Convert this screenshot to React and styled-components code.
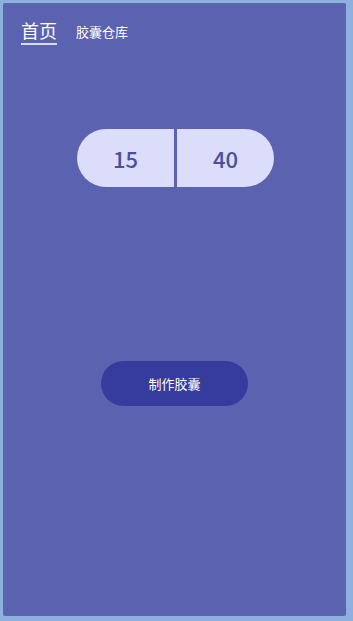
import styled, { createGlobalStyle } from 'styled-components';

const GlobalStyle = createGlobalStyle`
  html, body {
    margin: 0;
    padding: 0;
    background: #8db0de;
  }
  body {
    font-family: "Noto Sans CJK SC", "Noto Sans", sans-serif;
  }
`;

const Frame = styled.div`
  width: 353px;
  height: 621px;
  box-sizing: border-box;
  padding: 3px 7px 5px 3px;
`;

const Screen = styled.div`
  height: 100%;
  background: #5b62b0;
  border-radius: 2px;
  display: flex;
  flex-direction: column;
`;

const TabBar = styled.div`
  display: flex;
  align-items: flex-start;
  gap: 19px;
  padding: 15px 0 0 18px;
`;

const Tab = styled.div`
  color: #fff;
  font-size: ${(p) => (p.active ? '18px' : '13px')};
  line-height: 24px;
  margin-top: ${(p) => (p.active ? '0' : '2px')};
  padding-bottom: ${(p) => (p.active ? '1px' : '0')};
  border-bottom: ${(p) => (p.active ? '2px solid #dcdcf0' : 'none')};
`;

const Capsule = styled.div`
  margin: 84px auto 0;
  display: flex;
  gap: 3px;
  width: 197px;
  height: 58px;
  transform: translateX(1px);
`;

const Half = styled.div`
  flex: 1;
  background: #dcdcfb;
  border-radius: ${(p) => (p.side === 'left' ? '29px 0 0 29px' : '0 29px 29px 0')};
  display: flex;
  align-items: center;
  justify-content: center;
  color: #4a4f9c;
  font-size: 22px;
  font-weight: 500;
`;

const MakeButton = styled.button`
  margin: 174px auto 0;
  width: 147px;
  height: 45px;
  border: none;
  border-radius: 23px;
  background: #353c9d;
  color: #fff;
  font-family: "Noto Sans CJK SC", "Noto Sans", sans-serif;
  font-size: 13px;
`;

export default function App() {
  return (
    <>
      <GlobalStyle />
      <Frame>
        <Screen>
          <TabBar>
            <Tab active>首页</Tab>
            <Tab>胶囊仓库</Tab>
          </TabBar>
          <Capsule>
            <Half side="left">15</Half>
            <Half side="right">40</Half>
          </Capsule>
          <MakeButton>制作胶囊</MakeButton>
        </Screen>
      </Frame>
    </>
  );
}
